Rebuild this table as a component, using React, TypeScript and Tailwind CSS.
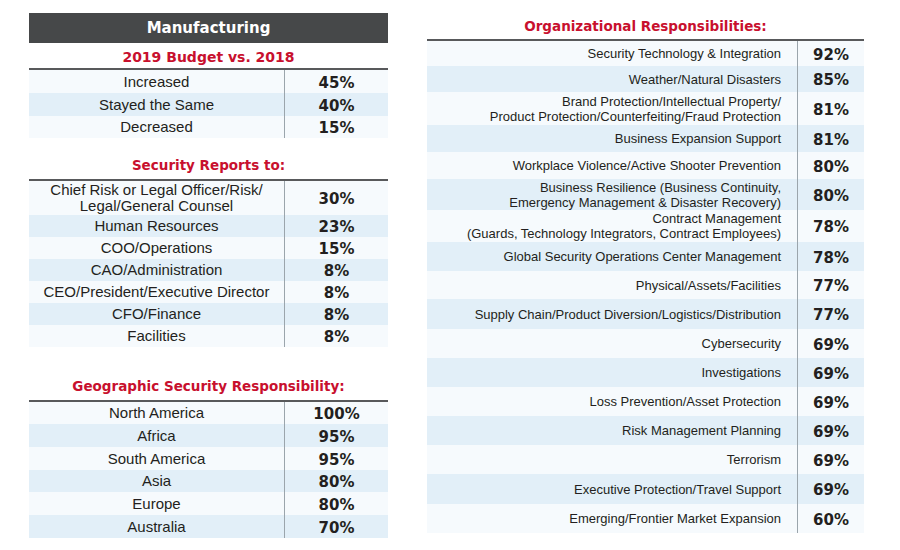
import React from "react";

type Row = { label: React.ReactNode; value: string; h: number };

const budget: Row[] = [
  { label: "Increased", value: "45%", h: 23 },
  { label: "Stayed the Same", value: "40%", h: 23 },
  { label: "Decreased", value: "15%", h: 22 },
];

const reports: Row[] = [
  { label: <>Chief Risk or Legal Officer/Risk/<br />Legal/General Counsel</>, value: "30%", h: 34 },
  { label: "Human Resources", value: "23%", h: 22 },
  { label: "COO/Operations", value: "15%", h: 22 },
  { label: "CAO/Administration", value: "8%", h: 22 },
  { label: "CEO/President/Executive Director", value: "8%", h: 22 },
  { label: "CFO/Finance", value: "8%", h: 22 },
  { label: "Facilities", value: "8%", h: 22 },
];

const geo: Row[] = [
  { label: "North America", value: "100%", h: 22 },
  { label: "Africa", value: "95%", h: 23 },
  { label: "South America", value: "95%", h: 23 },
  { label: "Asia", value: "80%", h: 22 },
  { label: "Europe", value: "80%", h: 23 },
  { label: "Australia", value: "70%", h: 23 },
];

const org: Row[] = [
  { label: "Security Technology & Integration", value: "92%", h: 25 },
  { label: "Weather/Natural Disasters", value: "85%", h: 26 },
  { label: <>Brand Protection/Intellectual Property/<br />Product Protection/Counterfeiting/Fraud Protection</>, value: "81%", h: 33 },
  { label: "Business Expansion Support", value: "81%", h: 27 },
  { label: "Workplace Violence/Active Shooter Prevention", value: "80%", h: 27 },
  { label: <>Business Resilience (Business Continuity,<br />Emergency Management &amp; Disaster Recovery)</>, value: "80%", h: 31 },
  { label: <>Contract Management<br />(Guards, Technology Integrators, Contract Employees)</>, value: "78%", h: 32 },
  { label: "Global Security Operations Center Management", value: "78%", h: 29 },
  { label: "Physical/Assets/Facilities", value: "77%", h: 28 },
  { label: "Supply Chain/Product Diversion/Logistics/Distribution", value: "77%", h: 30 },
  { label: "Cybersecurity", value: "69%", h: 29 },
  { label: "Investigations", value: "69%", h: 29 },
  { label: "Loss Prevention/Asset Protection", value: "69%", h: 29 },
  { label: "Risk Management Planning", value: "69%", h: 29 },
  { label: "Terrorism", value: "69%", h: 29 },
  { label: "Executive Protection/Travel Support", value: "69%", h: 30 },
  { label: "Emerging/Frontier Market Expansion", value: "60%", h: 29 },
];

const bold = "font-['DejaVu_Sans',sans-serif] font-bold";
const sans = "font-['Liberation_Sans',Arial,sans-serif]";

function Title({ children, h, extra, size, pb }: { children: React.ReactNode; h: string; extra?: string; size: string; pb: string }) {
  return (
    <div className={`flex items-end justify-center border-b-2 border-[#58595b] text-[#c8102e] ${pb} ${size} ${bold} ${h} ${extra ?? ""}`}>
      {children}
    </div>
  );
}

function LeftTable({ rows }: { rows: Row[] }) {
  return (
    <div className="flex flex-col">
      {rows.map((r, i) => (
        <div
          key={i}
          className={`flex ${i % 2 === 1 ? "bg-[#e2eff8]" : "bg-[#f6fafd]"}`}
          style={{ height: r.h }}
        >
          <div className={`w-[255px] flex items-center justify-center text-center text-[15px] leading-[16px] text-[#231f20] ${sans}`}>
            <span>{r.label}</span>
          </div>
          <div className={`flex-1 flex items-center justify-center pt-[3px] border-l border-[#9ba5ac] text-[15px] text-[#231f20] ${bold}`}>
            {r.value}
          </div>
        </div>
      ))}
    </div>
  );
}

function RightTable({ rows }: { rows: Row[] }) {
  return (
    <div className="flex flex-col">
      {rows.map((r, i) => (
        <div
          key={i}
          className={`flex ${i % 2 === 1 ? "bg-[#e2eff8]" : "bg-[#f6fafd]"}`}
          style={{ height: r.h }}
        >
          <div className={`w-[370px] flex items-center justify-end pr-[16px] text-right text-[13px] leading-[15px] text-[#231f20] ${sans}`}>
            <span>{r.label}</span>
          </div>
          <div className={`flex-1 flex items-center justify-center pt-[3px] border-l border-[#9ba5ac] text-[15px] text-[#231f20] ${bold}`}>
            {r.value}
          </div>
        </div>
      ))}
    </div>
  );
}

export default function App() {
  return (
    <div className="w-[900px] h-[550px] bg-white flex items-start overflow-hidden">
      <div className="ml-[29px] w-[359px] flex flex-col">
        <div className={`mt-[13px] h-[30px] bg-[#464849] text-white text-[15px] flex items-center justify-center pt-[1px] ${bold}`}>
          Manufacturing
        </div>
        <Title h="h-[27px]" size="text-[14px]" pb="pb-0">2019 Budget vs. 2018</Title>
        <LeftTable rows={budget} />
        <Title h="h-[29px]" extra="mt-[14px]" size="text-[13.5px]" pb="pb-[4px]">Security Reports to:</Title>
        <LeftTable rows={reports} />
        <Title h="h-[30px]" extra="mt-[25px]" size="text-[13.5px]" pb="pb-[4px]">Geographic Security Responsibility:</Title>
        <LeftTable rows={geo} />
      </div>
      <div className="ml-[39px] w-[437px] flex flex-col">
        <Title h="h-[29px]" extra="mt-[12px]" size="text-[13.5px]" pb="pb-[3px]">Organizational Responsibilities:</Title>
        <RightTable rows={org} />
      </div>
    </div>
  );
}
